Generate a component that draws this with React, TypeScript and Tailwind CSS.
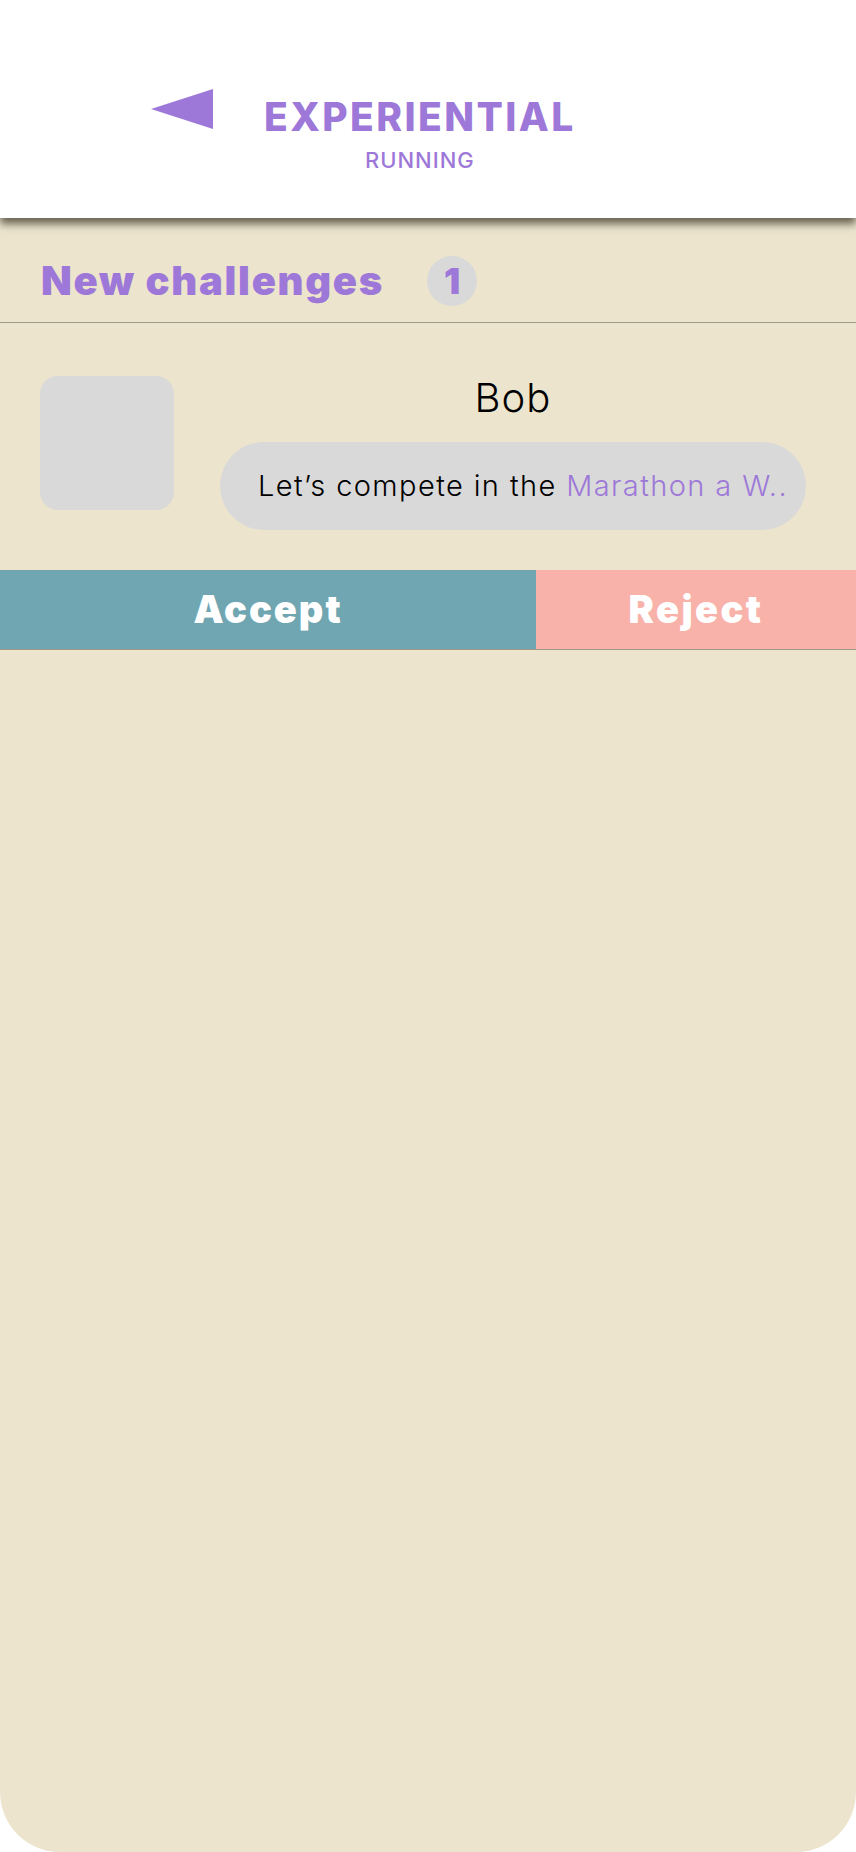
import React from 'react';

const PURPLE = 'text-[#9d78d8]';

const Header = () => (
  <header className="relative z-10 h-[218px] bg-white shadow-[0_6px_8px_rgba(60,55,40,0.75)] flex items-start pl-[151px] pt-[89px]">
    <svg width="62" height="40" viewBox="0 0 62 40" className="shrink-0">
      <polygon points="0,20 62,0 62,40" fill="#9d78d8" />
    </svg>
    <div className="ml-[51px] mt-[8px] flex flex-col items-center">
      <span className={`font-['Inter'] font-extrabold text-[39px] leading-[39px] tracking-[2.4px] ${PURPLE}`}>
        EXPERIENTIAL
      </span>
      <span className={`mt-[13px] font-['Inter'] font-medium text-[22px] leading-[22px] tracking-[1px] ${PURPLE}`}>
        RUNNING
      </span>
    </div>
  </header>
);

const ChallengeCard = () => (
  <div>
    <div className="flex items-start pl-[40px] pr-[50px] pt-[53px] pb-[40px]">
      <div className="w-[134px] h-[134px] rounded-[18px] bg-[#d9d9d9] shrink-0" />
      <div className="ml-[46px] flex-1 flex flex-col items-center">
        <span className="mt-[2px] font-['Inter'] font-light text-[40px] leading-[40px] tracking-[1px] text-black">Bob</span>
        <div className="mt-[24px] w-full h-[88px] rounded-full bg-[#d9d9d9] flex items-center pl-[38px] pr-[16px] overflow-hidden">
          <span className="font-['Inter'] font-light text-[29px] whitespace-nowrap tracking-[1.4px] text-black">
            Let’s compete in the <span className={PURPLE}>Marathon a W..</span>
          </span>
        </div>
      </div>
    </div>
    <div className="flex h-[80px] border-b border-[#9e9a8a]">
      <button className="w-[536px] bg-[#6fa6b1] text-white font-['Inter'] font-black text-[38px] tracking-[2px]">
        Accept
      </button>
      <button className="flex-1 bg-[#f8b2aa] text-white font-['Inter'] font-black text-[38px] tracking-[2.4px]">
        Reject
      </button>
    </div>
  </div>
);

export default function App() {
  return (
    <div className="w-[856px] h-[1852px] bg-white">
      <div className="h-full bg-[#ece4cd] rounded-b-[60px] overflow-hidden">
        <Header />
        <div className="flex items-start h-[105px] pt-[38px] pl-[41px] border-b border-[#9e9a8a]">
          <span className={`font-['Inter'] font-black text-[40px] leading-[50px] tracking-[1.7px] ${PURPLE}`}>
            New challenges
          </span>
          <span
            className={`ml-[43px] w-[50px] h-[50px] rounded-full bg-[#d9d9d9] flex items-center justify-center font-['Inter'] font-black text-[36px] ${PURPLE}`}
          >
            1
          </span>
        </div>
        <ChallengeCard />
      </div>
    </div>
  );
}
